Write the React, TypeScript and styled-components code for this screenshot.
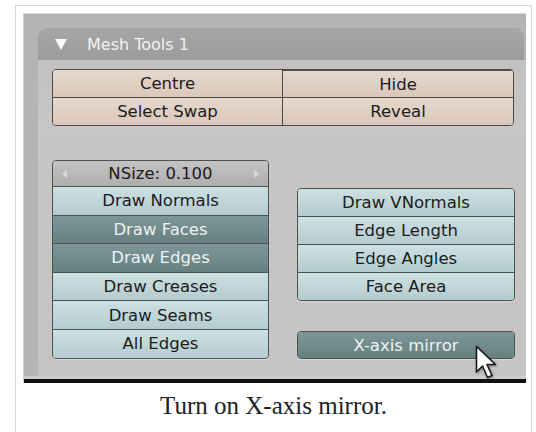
import React from 'react';
import styled, { createGlobalStyle, css } from 'styled-components';

const GlobalStyle = createGlobalStyle`
  html, body {
    margin: 0;
    padding: 0;
    background: #ffffff;
  }
`;

const Thumb = styled.div`
  box-sizing: border-box;
  margin: 5px 0 0 15px;
  width: 517px;
  height: 440px;
  padding: 7px 0 0 7px;
  border: 1px solid #d6d6d6;
  border-bottom: none;
  background: #ffffff;
`;

const Shot = styled.div`
  position: relative;
  box-sizing: border-box;
  width: 503px;
  height: 370px;
  display: flex;
  flex-direction: column;
  overflow: hidden;
  background: #b5b3b3;
  border-top: 1px solid #d8d8d8;
  border-left: 1px solid #d0d0d0;
`;

const Panel = styled.div`
  flex: 1;
  display: flex;
  flex-direction: column;
  margin: 14px 0 0 14px;
`;

const Header = styled.div`
  height: 32px;
  display: flex;
  align-items: center;
  gap: 20px;
  padding-left: 17px;
  margin-right: 2px;
  border-radius: 9px 9px 0 0;
  background: linear-gradient(#a6a6a6, #9c9c9c);
  color: #f2f2f2;
  font-family: 'DejaVu Sans', sans-serif;
  font-size: 16px;
`;

const Triangle = styled.span`
  width: 0;
  height: 0;
  border-left: 6px solid transparent;
  border-right: 6px solid transparent;
  border-top: 11px solid #fafafa;
`;

const Body = styled.div`
  flex: 1;
  display: flex;
  flex-direction: column;
  padding: 9px 0 0 14px;
  background: linear-gradient(#c2c0c0, #c8c5c5 20%, #c6c3c3);
`;

const BottomBar = styled.div`
  height: 3px;
  background: #cfcccc;
  border-bottom: 4px solid #111111;
`;

const Group = styled.div<{ $width: number }>`
  display: flex;
  flex-direction: column;
  width: ${(p) => p.$width}px;
  border: 1px solid #4c5050;
  border-radius: 4px;
  overflow: hidden;
  box-shadow: 0 1px 1px rgba(255, 255, 255, 0.4);
`;

const Grid = styled.div`
  display: grid;
  grid-template-columns: 1fr 1fr;
  width: 460px;
  border: 1px solid #4c4a48;
  border-radius: 4px;
  overflow: hidden;
`;

type Variant = 'tan' | 'light' | 'dark' | 'num';

const variants: Record<Variant, ReturnType<typeof css>> = {
  tan: css`
    background: linear-gradient(#e6d8cc, #d9c8ba);
    color: #1c1c1c;
  `,
  light: css`
    background: linear-gradient(#cde0e2, #b4cccf);
    color: #1c1c1c;
  `,
  dark: css`
    background: linear-gradient(#7d9698, #67807f);
    color: #eef2f2;
  `,
  num: css`
    background: linear-gradient(#c4c4c4, #aeaeae);
    color: #1c1c1c;
  `,
};

const Btn = styled.div<{ $v: Variant; $h: number }>`
  position: relative;
  box-sizing: border-box;
  height: ${(p) => p.$h}px;
  flex: none;
  display: flex;
  align-items: center;
  justify-content: center;
  font-family: 'DejaVu Sans', sans-serif;
  font-size: 16.5px;
  ${(p) => variants[p.$v]};
  & + & {
    border-top: 1px solid #4a5252;
  }
`;

const Cell = styled(Btn)`
  &:nth-child(odd) {
    border-right: 1px solid #4a4846;
  }
  &:nth-child(n + 3) {
    border-top: 1px solid #4a4846;
  }
`;

const Arrow = styled.span<{ $side: 'left' | 'right' }>`
  position: absolute;
  top: 50%;
  ${(p) => (p.$side === 'left' ? 'left: 9px;' : 'right: 9px;')}
  margin-top: -4px;
  width: 0;
  height: 0;
  border-top: 4px solid transparent;
  border-bottom: 4px solid transparent;
  ${(p) =>
    p.$side === 'left'
      ? 'border-right: 5px solid #d8d8d8;'
      : 'border-left: 5px solid #d8d8d8;'}
`;

const Columns = styled.div`
  display: flex;
  align-items: flex-start;
  gap: 28px;
  margin-top: 34px;
`;

const RightCol = styled.div`
  display: flex;
  flex-direction: column;
  gap: 30px;
  padding-top: 28px;
`;

const Cursor = styled.svg`
  position: absolute;
  left: 451px;
  top: 331px;
  filter: drop-shadow(1px 1px 1px rgba(0, 0, 0, 0.35));
`;

const Caption = styled.div`
  padding-right: 7px;
  margin-top: 9px;
  text-align: center;
  font-family: 'Liberation Serif', 'Times New Roman', serif;
  font-size: 25px;
  color: #202122;
`;

const top = ['Centre', 'Hide', 'Select Swap', 'Reveal'];

const left: [string, Variant][] = [
  ['Draw Normals', 'light'],
  ['Draw Faces', 'dark'],
  ['Draw Edges', 'dark'],
  ['Draw Creases', 'light'],
  ['Draw Seams', 'light'],
  ['All Edges', 'light'],
];

const right = ['Draw VNormals', 'Edge Length', 'Edge Angles', 'Face Area'];

export default function App() {
  return (
    <>
      <GlobalStyle />
      <Thumb>
        <Shot>
          <Panel>
            <Header>
              <Triangle />
              Mesh Tools 1
            </Header>
            <Body>
              <Grid>
                {top.map((t, i) => (
                  <Cell key={t} $v="tan" $h={i < 2 ? 27 : 28}>
                    {t}
                  </Cell>
                ))}
              </Grid>
              <Columns>
                <Group $width={215}>
                  <Btn $v="num" $h={25}>
                    <Arrow $side="left" />
                    NSize: 0.100
                    <Arrow $side="right" />
                  </Btn>
                  {left.map(([t, v]) => (
                    <Btn key={t} $v={v} $h={28.6}>
                      {t}
                    </Btn>
                  ))}
                </Group>
                <RightCol>
                  <Group $width={216}>
                    {right.map((t, i) => (
                      <Btn key={t} $v="light" $h={i === 0 ? 27 : 28}>
                        {t}
                      </Btn>
                    ))}
                  </Group>
                  <Group $width={216}>
                    <Btn $v="dark" $h={26}>
                      X-axis mirror
                    </Btn>
                  </Group>
                </RightCol>
              </Columns>
            </Body>
          </Panel>
          <BottomBar />
          <Cursor width="24" height="36" viewBox="0 0 24 36">
            <path
              d="M1.5 1.5 L1.5 27 L7.5 21 L12.5 32.5 L17 30.5 L12 19.5 L20.5 19.5 Z"
              fill="#ffffff"
              stroke="#1a1a1a"
              strokeWidth="1.6"
              strokeLinejoin="round"
            />
          </Cursor>
        </Shot>
        <Caption>Turn on X-axis mirror.</Caption>
      </Thumb>
    </>
  );
}
